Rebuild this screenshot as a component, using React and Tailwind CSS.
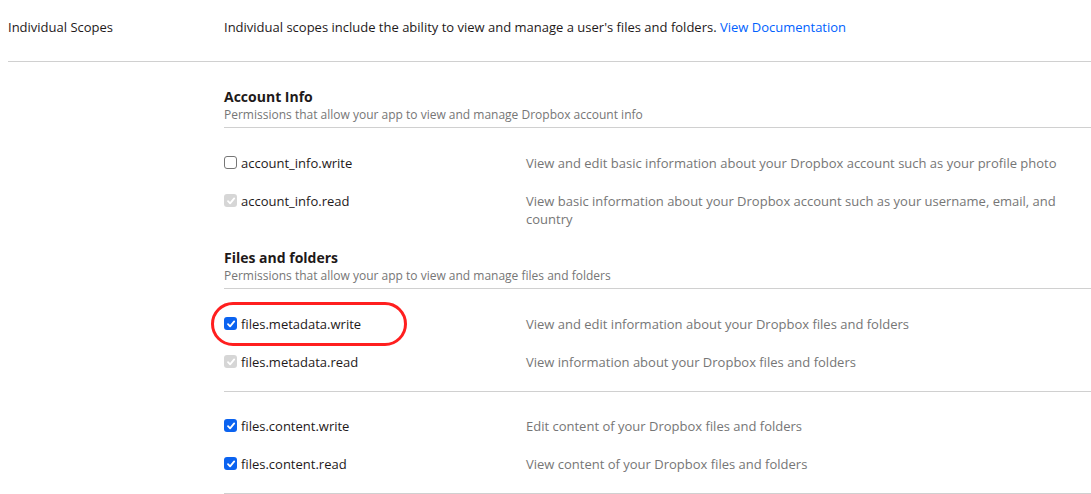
import React from "react";

function Checkbox({ state }) {
  if (state === "off") {
    return (
      <span className="mt-[2px] h-[13px] w-[13px] shrink-0 rounded-[3px] border border-[#767676] bg-white" />
    );
  }
  const bg = state === "on" ? "bg-[#0b63f0]" : "bg-[#d6d6d6]";
  return (
    <span className={`mt-[2px] flex h-[13px] w-[13px] shrink-0 items-center justify-center rounded-[3px] ${bg}`}>
      <svg width="10" height="10" viewBox="0 0 10 10" fill="none">
        <path d="M2 5.2 L4.1 7.3 L8.2 2.4" stroke="white" strokeWidth="1.8" strokeLinecap="round" strokeLinejoin="round" />
      </svg>
    </span>
  );
}

function ScopeRow({ name, desc, state, marked }) {
  return (
    <div className="flex text-[13px] leading-[18px]">
      <div className="relative flex w-[302px] shrink-0 items-start gap-[4px]">
        <Checkbox state={state} />
        <span className="text-[#1e1919]">{name}</span>
        {marked && (
          <div className="absolute left-[-13px] top-[-13px] h-[44px] w-[196px] rounded-[22px] border-[3px] border-[#ff1f1f]" />
        )}
      </div>
      <div className="pr-[24px] text-[#767676]">{desc}</div>
    </div>
  );
}

function SectionHead({ title, sub }) {
  return (
    <div className="border-b border-[#d0d0d0] pb-[4px]">
      <div className="text-[14px] font-bold leading-[20px] text-[#1e1919]">{title}</div>
      <div className="text-[12px] leading-[16px] text-[#767676]">{sub}</div>
    </div>
  );
}

function RowGroup({ rows, bordered, top = "pt-[26px]" }) {
  return (
    <div className={`flex flex-col gap-[20px] pb-[20px] ${top} ${bordered ? "border-b border-[#d0d0d0]" : ""}`}>
      {rows.map((r) => (
        <ScopeRow key={r.name} {...r} />
      ))}
    </div>
  );
}

export default function App() {
  return (
    <div
      className="min-h-screen bg-white pl-[8px]"
      style={{ fontFamily: '"Open Sans", "Liberation Sans", sans-serif' }}
    >
      <div className="flex border-b border-[#d0d0d0] pb-[25px] pt-[18px] text-[13px] leading-[18px]">
        <div className="w-[216px] shrink-0 text-[#1e1919]">Individual Scopes</div>
        <div className="text-[#1e1919]">
          Individual scopes include the ability to view and manage a user's files and folders.{" "}
          <span className="text-[#0061fe]">View Documentation</span>
        </div>
      </div>

      <div className="ml-[216px] pt-[25px]">
        <SectionHead
          title="Account Info"
          sub="Permissions that allow your app to view and manage Dropbox account info"
        />
        <RowGroup
          rows={[
            {
              name: "account_info.write",
              desc: "View and edit basic information about your Dropbox account such as your profile photo",
              state: "off",
            },
            {
              name: "account_info.read",
              desc: "View basic information about your Dropbox account such as your username, email, and country",
              state: "disabled",
            },
          ]}
        />
        <SectionHead
          title="Files and folders"
          sub="Permissions that allow your app to view and manage files and folders"
        />
        <RowGroup
          bordered
          rows={[
            {
              name: "files.metadata.write",
              desc: "View and edit information about your Dropbox files and folders",
              state: "on",
              marked: true,
            },
            {
              name: "files.metadata.read",
              desc: "View information about your Dropbox files and folders",
              state: "disabled",
            },
          ]}
        />
        <RowGroup
          bordered
          top="pt-[25px]"
          rows={[
            {
              name: "files.content.write",
              desc: "Edit content of your Dropbox files and folders",
              state: "on",
            },
            {
              name: "files.content.read",
              desc: "View content of your Dropbox files and folders",
              state: "on",
            },
          ]}
        />
      </div>
    </div>
  );
}
